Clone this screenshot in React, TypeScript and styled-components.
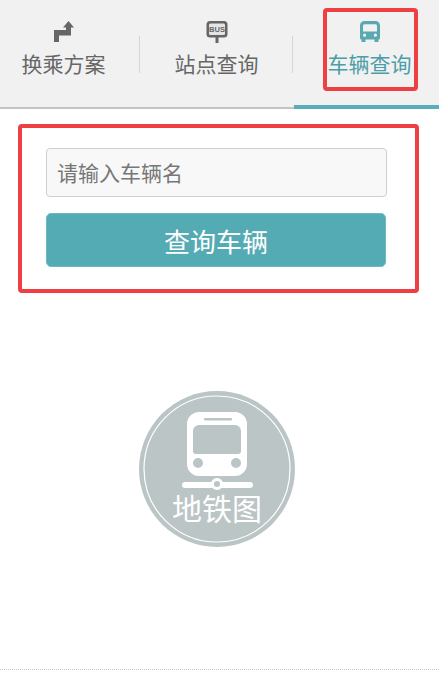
import React from "react";
import styled, { createGlobalStyle } from "styled-components";

const Global = createGlobalStyle`
  html, body { margin: 0; padding: 0; background: #fff; }
  body { font-family: "Noto Sans CJK SC", "Liberation Sans", sans-serif; }
  * { box-sizing: border-box; }
`;
const Page = styled.div`
  position: relative;
  width: 439px;
  height: 679px;
  overflow: hidden;
  display: flex;
  flex-direction: column;
`;
const TabBar = styled.div`
  display: flex;
  height: 109px;
  margin-left: -13px;
  width: 459px;
  background: #f1f1f1;
  border-bottom: 2px solid #c4c4c4;
`;
const Tab = styled.div<{ $active?: boolean; $last?: boolean }>`
  position: relative;
  flex: none;
  width: 153px;
  display: flex;
  flex-direction: column;
  align-items: center;
  padding-top: 21px;
  font-size: 21px;
  line-height: 30px;
  color: ${(p) => (p.$active ? "#4b9ea8" : "#666")};
  &::after {
    content: "";
    display: ${(p) => (p.$last ? "none" : "block")};
    position: absolute;
    right: 0;
    top: 36px;
    width: 1px;
    height: 37px;
    background: #d6d6d6;
  }
  &::before {
    content: "";
    display: ${(p) => (p.$active ? "block" : "none")};
    position: absolute;
    left: 1px;
    right: 0;
    bottom: -2px;
    height: 4px;
    background: #5aaeb7;
  }
`;
const TabIcon = styled.svg`
  display: block;
  width: 22px;
  height: 22px;
  margin-bottom: 5px;
`;
const Form = styled.div`
  display: flex;
  flex-direction: column;
  gap: 16px;
  padding: 39px 52px 0 46px;
`;
const Field = styled.div`
  height: 49px;
  background: #f8f8f8;
  border: 1px solid #cfcfcf;
  border-radius: 4px;
  padding-left: 10px;
  font-size: 21px;
  line-height: 47px;
  color: #777;
`;
const Submit = styled.div`
  height: 54px;
  margin-right: 1px;
  background: #55abb4;
  border: 1px solid #6fb8c0;
  border-radius: 5px;
  color: #fff;
  font-size: 26px;
  line-height: 53px;
  text-align: center;
`;
const LogoWrap = styled.div`
  display: flex;
  justify-content: center;
  margin-top: 124px;
  padding-right: 5px;
`;
const Footer = styled.div`
  position: absolute;
  left: 0;
  right: 0;
  top: 669px;
  border-top: 1px dotted #c8c8c8;
`;
const Highlight = styled.div<{ $x: number; $y: number; $w: number; $h: number }>`
  position: absolute;
  left: ${(p) => p.$x}px;
  top: ${(p) => p.$y}px;
  width: ${(p) => p.$w}px;
  height: ${(p) => p.$h}px;
  border: 4px solid #ee3f42;
  border-radius: 4px;
`;

export default function App() {
  return (
    <Page>
      <Global />
      <TabBar>
        <Tab>
          <TabIcon viewBox="0 0 22 22">
            <path d="M1 21V9H13V6.5H10L15.5 0 21 6.5H18V14.5H6V21Z" fill="#666" />
          </TabIcon>
          换乘方案
        </Tab>
        <Tab>
          <TabIcon viewBox="0 0 22 22">
            <rect x="0.5" y="0" width="21" height="16.5" rx="3.5" fill="#666" />
            <rect x="3" y="2.5" width="16" height="11.5" rx="1.5" fill="#e4e4e4" />
            <rect x="9.5" y="16" width="3" height="6" fill="#666" />
            <text x="11" y="11" textAnchor="middle" fontSize="7.5" fontWeight="700" fontFamily="Liberation Sans, sans-serif" fill="#666">BUS</text>
          </TabIcon>
          站点查询
        </Tab>
        <Tab $active $last>
          <TabIcon viewBox="0 0 22 22">
            <path fillRule="evenodd" fill="#5aa9b2" d="M5.5 0H16.5A4.5 4.5 0 0 1 21 4.5V17A1.5 1.5 0 0 1 19.5 18.5V21H15.5V18.5H6.5V21H2.5V18.5A1.5 1.5 0 0 1 1 17V4.5A4.5 4.5 0 0 1 5.5 0ZM5.5 3.2A1.5 1.5 0 0 0 4 4.7V10.5H18V4.7A1.5 1.5 0 0 0 16.5 3.2ZM5.6 12.6A1.6 1.6 0 1 0 5.6 15.8 1.6 1.6 0 1 0 5.6 12.6ZM16.4 12.6A1.6 1.6 0 1 0 16.4 15.8 1.6 1.6 0 1 0 16.4 12.6Z" />
          </TabIcon>
          车辆查询
        </Tab>
      </TabBar>
      <Form>
        <Field>请输入车辆名</Field>
        <Submit>查询车辆</Submit>
      </Form>
      <LogoWrap>
        <svg width="156" height="156" viewBox="0 0 156 156">
          <circle cx="78" cy="78" r="78" fill="#bbc5c6" />
          <circle cx="78" cy="78" r="73" fill="none" stroke="#fff" strokeWidth="1.2" />
          <path fillRule="evenodd" fill="#fff" d="M60 21H96A12 12 0 0 1 108 33V73A12 12 0 0 1 96 85H60A12 12 0 0 1 48 73V33A12 12 0 0 1 60 21ZM60 34A6 6 0 0 0 54 40V60A3 3 0 0 0 57 63H99A3 3 0 0 0 102 60V40A6 6 0 0 0 96 34ZM59 67A5 5 0 1 0 59 77 5 5 0 1 0 59 67ZM97 67A5 5 0 1 0 97 77 5 5 0 1 0 97 67Z" />
          <rect x="65" y="27" width="28" height="2.5" rx="1" fill="#bbc5c6" />
          <rect x="43" y="91" width="71" height="6" rx="3" fill="#fff" />
          <circle cx="78" cy="93" r="4.5" fill="#bbc5c6" stroke="#fff" strokeWidth="3" />
          <text x="78" y="129" textAnchor="middle" fontSize="30" fontFamily="Noto Sans CJK SC, sans-serif" fill="#fff">地铁图</text>
        </svg>
      </LogoWrap>
      <Footer />
      <Highlight $x={323} $y={8} $w={95} $h={83} />
      <Highlight $x={18} $y={124} $w={401} $h={169} />
    </Page>
  );
}
